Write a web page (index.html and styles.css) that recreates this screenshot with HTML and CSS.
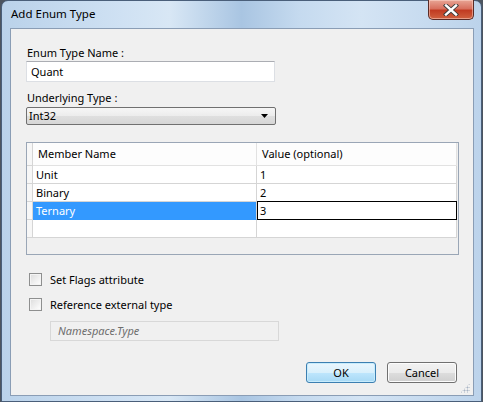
FILE: index.html
```html
<!DOCTYPE html>
<html>
<head>
<meta charset="utf-8">
<link rel="stylesheet" href="styles.css">
</head>
<body>
<div class="window">
  <div class="titlebar">
    <span class="title">Add Enum Type</span>
    <div class="close"><svg width="16" height="12" viewBox="0 0 16 12"><path d="M3 1.5 L13 10.5 M13 1.5 L3 10.5" stroke="#3a3a3a" stroke-width="4.2" stroke-linecap="square"/><path d="M3 1.5 L13 10.5 M13 1.5 L3 10.5" stroke="#ffffff" stroke-width="2.4" stroke-linecap="square"/></svg></div>
  </div>
  <div class="client">
    <div class="label l1">Enum Type Name :</div>
    <div class="textbox">Quant</div>
    <div class="label l2">Underlying Type :</div>
    <div class="combo"><span>Int32</span><svg width="7" height="4" viewBox="0 0 7 4"><path d="M0 0 H7 L3.5 4 Z" fill="#000"/></svg></div>
    <div class="grid">
      <div class="row header">
        <div class="rh"></div>
        <div class="cell c1">Member Name</div>
        <div class="cell c2">Value (optional)</div>
      </div>
      <div class="row">
        <div class="rh"></div>
        <div class="cell c1">Unit</div>
        <div class="cell c2">1</div>
      </div>
      <div class="row">
        <div class="rh"></div>
        <div class="cell c1">Binary</div>
        <div class="cell c2">2</div>
      </div>
      <div class="row">
        <div class="rh"></div>
        <div class="cell c1 selected">Ternary</div>
        <div class="cell c2 editing">3</div>
      </div>
      <div class="row">
        <div class="rh"></div>
        <div class="cell c1"></div>
        <div class="cell c2"></div>
      </div>
    </div>
    <div class="check c-first"><span class="box"></span><span>Set Flags attribute</span></div>
    <div class="check"><span class="box"></span><span>Reference external type</span></div>
    <div class="nsbox">Namespace.Type</div>
    <div class="buttons">
      <div class="btn ok">OK</div>
      <div class="btn">Cancel</div>
    </div>
    <div class="grip"></div>
  </div>
</div>
</body>
</html>
```
FILE: styles.css
```css
* { box-sizing: border-box; }
html, body { margin: 0; padding: 0; }
body {
  width: 483px;
  height: 402px;
  overflow: hidden;
  background: #4d5560;
  font-family: "Segoe UI", "Noto Sans", "Open Sans", sans-serif;
  font-size: 11px;
  color: #000;
}
.window {
  width: 481px;
  height: 402px;
  margin-left: 1px;
  border: 1px solid #4a5f7a;
  border-radius: 7px 7px 0 0;
  background: linear-gradient(to right, #bad2ea 0%, #cfe1f3 25%, #d8e7f5 35%, #a9c5e2 50%, #c5daef 62%, #d4e4f4 75%, #bcd3eb 100%);
  display: flex;
  flex-direction: column;
}
.titlebar {
  height: 27px;
  flex: none;
  display: flex;
  align-items: flex-start;
  justify-content: space-between;
}
.title {
  margin: 5px 0 0 9px;
  line-height: 16px;
  font-size: 11.5px;
}
.close {
  width: 46px;
  height: 20px;
  margin: -1px 7px 0 0;
  border: 1px solid #5a2b26;
  border-top: none;
  border-radius: 0 0 5px 5px;
  background: linear-gradient(to bottom, #e8a595 0%, #d8705e 45%, #c13b22 55%, #d0613f 100%);
  display: flex;
  align-items: center;
  justify-content: center;
  box-shadow: inset 0 0 0 1px rgba(255,220,210,0.5);
}
.client {
  flex: 1;
  margin: 0 7px 5px 8px;
  border: 1px solid #8a9db5;
  background: #f0f0f0;
  padding: 16px 16px 0 15px;
  display: flex;
  flex-direction: column;
  align-items: flex-start;
  position: relative;
}
.label {
  height: 16px;
  line-height: 16px;
  padding-left: 1px;
}
.textbox {
  width: 249px;
  height: 21px;
  background: #fff;
  border: 1px solid #dcdfe4;
  border-top-color: #abadb3;
  padding: 0 4px;
  line-height: 19px;
}
.l2 { margin-top: 8px; height: 17px; }
.combo {
  width: 250px;
  height: 18px;
  border: 1px solid #707070;
  border-radius: 2px;
  background: linear-gradient(to bottom, #f6f6f6 0%, #ececec 50%, #dfdfdf 51%, #d6d6d6 100%);
  display: flex;
  align-items: center;
  justify-content: space-between;
  padding: 0 7px 0 2px;
  line-height: 16px;
}
.grid {
  margin-top: 17px;
  width: 433px;
  height: 113px;
  border: 1px solid #9aa6b6;
  background: #f0f0f0;
  display: flex;
  flex-direction: column;
}
.row {
  display: flex;
  height: 18px;
  flex: none;
}
.row.header { height: 23px; }
.rh {
  width: 6px;
  flex: none;
  background: #f7f7f7;
  border-right: 1px solid #d5d5d5;
  border-bottom: 1px solid #d5d5d5;
}
.cell {
  background: #fff;
  border-right: 1px solid #d5d5d5;
  border-bottom: 1px solid #d5d5d5;
  padding-left: 3px;
  line-height: 17px;
  white-space: nowrap;
}
.header .cell {
  background: #fdfdfd;
  border-right-color: #e2e2e2;
  border-bottom-color: #e2e2e2;
  line-height: 22px;
  padding-left: 5px;
}
.c1 { width: 224px; }
.c2 { width: 200px; }
.cell.selected {
  background: #3399ff;
  color: #fff;
  border-bottom-color: #3399ff;
}
.cell.editing {
  border: 1px solid #000;
  margin-top: -1px;
  height: 19px;
  line-height: 17px;
  padding-left: 2px;
}
.check {
  display: flex;
  align-items: center;
  height: 16px;
  margin-left: 3px;
  margin-top: 9px;
}
.check.c-first { margin-top: 16px; }
.box {
  width: 13px;
  height: 13px;
  border: 1px solid #8e8f8f;
  background: linear-gradient(135deg, #dcdcdc 0%, #f5f5f5 70%, #ffffff 100%);
  box-shadow: inset 0 0 0 1px #f4f4f4;
  margin-right: 8px;
}
.nsbox {
  margin-top: 9px;
  margin-left: 24px;
  width: 229px;
  height: 20px;
  border: 1px solid #d8d8d8;
  background: #f0f0f0;
  font-style: italic;
  color: #6d6d6d;
  padding-left: 7px;
  line-height: 18px;
}
.buttons {
  margin-top: 21px;
  align-self: flex-end;
  display: flex;
  gap: 11px;
}
.btn {
  width: 70px;
  height: 21px;
  border: 1px solid #707070;
  border-radius: 3px;
  background: linear-gradient(to bottom, #f2f2f2 0%, #ebebeb 50%, #dddddd 51%, #cfcfcf 100%);
  box-shadow: inset 0 0 0 1px #fcfcfc;
  text-align: center;
  line-height: 19px;
}
.btn.ok {
  border-color: #3c7fb1;
  background: linear-gradient(to bottom, #eaf6fd 0%, #d9f0fc 50%, #bee6fd 51%, #a7d9f5 100%);
  box-shadow: inset 0 0 0 1px #c8ecfc;
}
.grip {
  position: absolute;
  right: 3px;
  bottom: 2px;
  width: 10px;
  height: 10px;
  background-image: radial-gradient(circle, #a8b4c4 0.9px, transparent 1.1px);
  background-size: 3px 3px;
  clip-path: polygon(100% 0, 100% 100%, 0 100%);
}
```
